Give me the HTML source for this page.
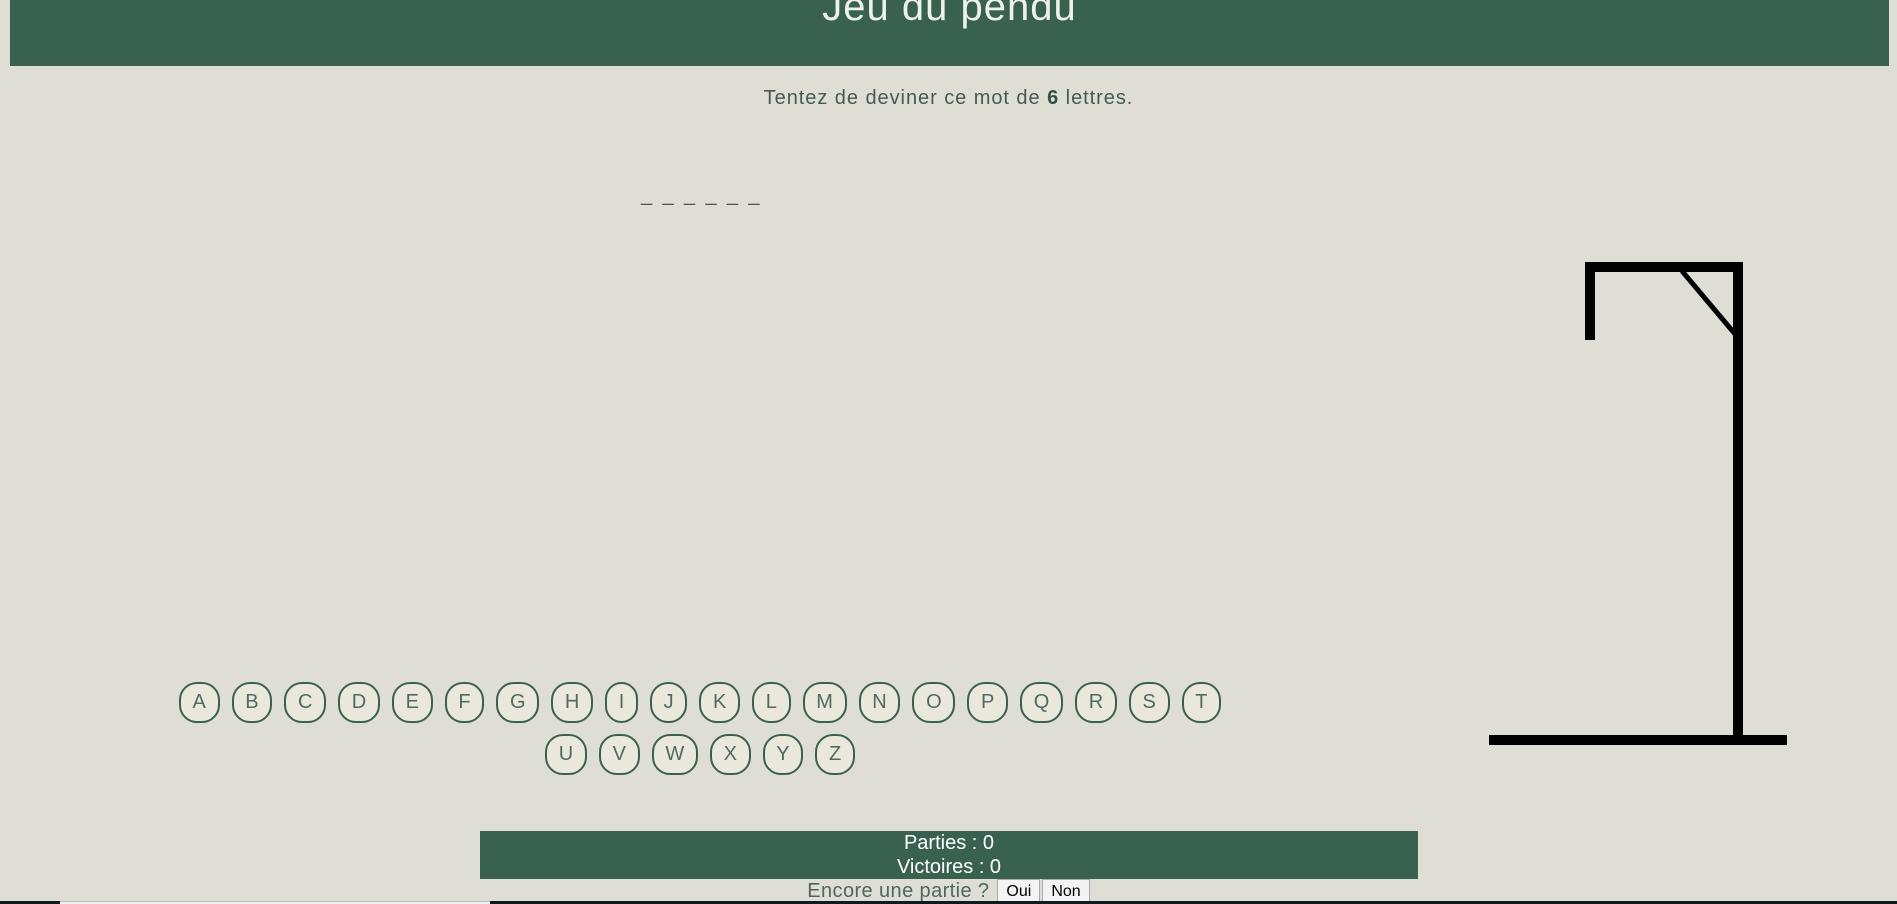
<!DOCTYPE html>
<html><head><meta charset="utf-8"><style>
*{box-sizing:border-box;margin:0;padding:0}
html,body{width:1897px;height:904px;overflow:hidden;background:#dfded5;font-family:"Liberation Sans",sans-serif;position:relative}
.hdr{position:absolute;left:10px;top:0;width:1879px;height:66px;background:#386150}
.title{position:absolute;left:0;width:100%;top:-15px;text-align:center;color:#eef2e8;font-size:40px;letter-spacing:1px;font-weight:300}
.sub{position:absolute;left:0;width:1897px;top:87px;text-align:center;color:#455a55;font-size:20px;letter-spacing:0.95px}
.sub b{color:#2f5446}
.dash{position:absolute;left:641px;top:184px;color:#555;font-size:20px;letter-spacing:2.4px}
.letters{position:absolute;left:0;top:682px;width:1400px;text-align:center;font-size:0}
.row{height:52px}
.k{display:inline-block;height:41px;line-height:37px;padding:0 11.7px;margin:0 6px;border:2px solid #3a6150;border-radius:18px;background:#eae8dc;color:#506a62;font-size:20px;vertical-align:top}
.stats{position:absolute;left:480px;top:831px;width:938px;height:48px;background:#386150;color:#fff;text-align:center;font-size:20px;line-height:24px}
.again{position:absolute;left:0;width:1897px;top:879px;text-align:center;font-size:20px;color:#4f6660;letter-spacing:0.4px;line-height:24px}
.again button{font-family:"Liberation Sans",sans-serif;font-size:16px;padding:2px 8px;border:1px solid #aaa;background:#f3f3f3;color:#000;vertical-align:top;height:25px;margin-left:2px}
.bot{position:absolute;left:0;top:901px;width:1897px;height:3px;background:#0d1d1d}
.bot i{position:absolute;left:60px;top:0;width:430px;height:3px;background:#f0f0f0;border-top:1px solid #bbb}
</style></head><body>
<div class="hdr"><div class="title">Jeu du pendu</div></div>
<div class="sub">Tentez de deviner ce mot de <b>6</b> lettres.</div>
<div class="dash">_ _ _ _ _ _</div>
<div class="letters">
<div class="row"><span class="k">A</span><span class="k">B</span><span class="k">C</span><span class="k">D</span><span class="k">E</span><span class="k">F</span><span class="k">G</span><span class="k">H</span><span class="k">I</span><span class="k">J</span><span class="k">K</span><span class="k">L</span><span class="k">M</span><span class="k">N</span><span class="k">O</span><span class="k">P</span><span class="k">Q</span><span class="k">R</span><span class="k">S</span><span class="k">T</span></div>
<div class="row"><span class="k">U</span><span class="k">V</span><span class="k">W</span><span class="k">X</span><span class="k">Y</span><span class="k">Z</span></div>
</div>
<svg style="position:absolute;left:0;top:0" width="1897" height="904">
<g stroke="#000" stroke-width="10" fill="none">
<polyline points="1590,340 1590,267 1738,267 1738,740"/>
<line x1="1489" y1="740" x2="1787" y2="740"/>
</g>
<line x1="1682" y1="271" x2="1735" y2="334" stroke="#000" stroke-width="5"/>
</svg>
<div class="stats">Parties : 0<br>Victoires : 0</div>
<div class="again">Encore une partie ? <button>Oui</button><button>Non</button></div>
<div class="bot"><i></i></div>
</body></html>
